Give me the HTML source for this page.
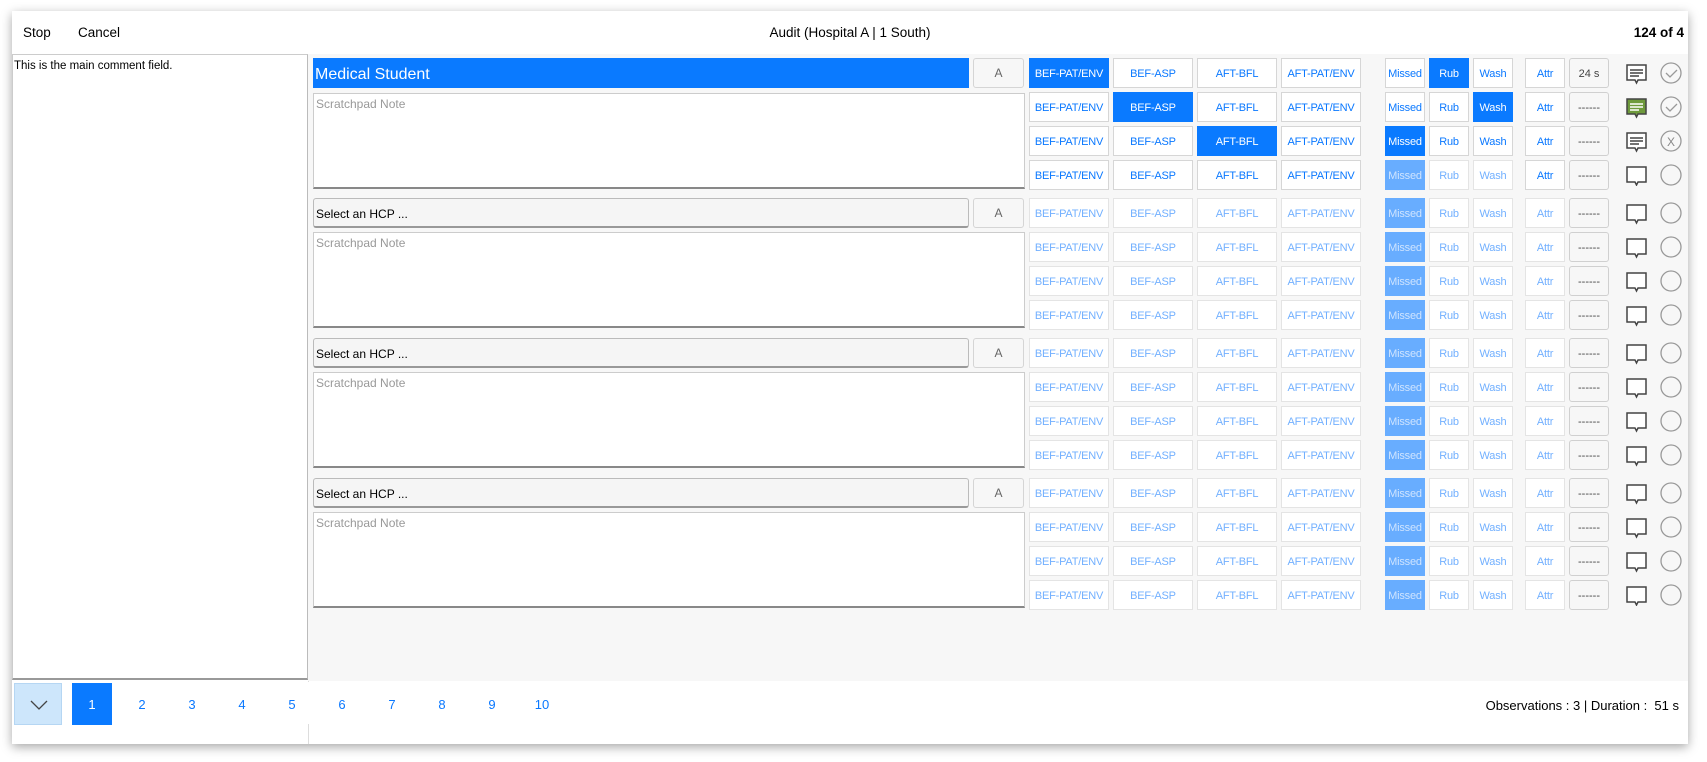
<!DOCTYPE html>
<html><head><meta charset="utf-8"><style>
*{box-sizing:border-box;margin:0;padding:0}
body{width:1707px;height:762px;background:#fff;font-family:"Liberation Sans",sans-serif;position:relative;overflow:hidden}
#win{position:absolute;left:12px;top:11px;width:1676px;height:733px;background:#fff;box-shadow:0 3px 10px rgba(0,0,0,.35)}
.a{position:absolute}
.hd{font-size:13.5px;color:#000;top:14px}
#left{left:0;top:43px;width:296px;height:626px;border:1px solid #ccc;border-right:1px solid #bbb;border-bottom:2px solid #999;background:#fff;font-size:11.5px;padding:5px 1px}
#main{left:296px;top:43px;width:1380px;height:627px;background:#f7f7f7}
#sep{left:296px;top:670px;width:1px;height:63px;background:#ddd}
.b{position:absolute;height:30px;border:1px solid #d6d6d6;background:#fff;color:#0a78ff;font-size:11px;letter-spacing:-0.2px;display:flex;align-items:center;justify-content:center;padding-top:2px}
.on{background:#0a7aff;border-color:#0a7aff;color:#fff}
.f{color:#72b0ff;border-color:#e4e4e4}
.fm{background:#68adff;border-color:#68adff;color:#cfe4ff}
.t{position:absolute;height:30px;width:40px;border:1px solid #d0d0d0;border-radius:3px;background:#f7f7f7;color:#444;font-size:11px;display:flex;align-items:center;justify-content:center;padding-top:2px}
.hcp{position:absolute;left:301px;width:656px;height:30px;border:1px solid #bbb;border-bottom:2px solid #999;border-radius:3px;background:#f5f5f5;font-size:12px;padding-left:2px;padding-top:2px;display:flex;align-items:center}
.ab{position:absolute;left:961px;width:51px;height:30px;border:1px solid #d5d5d5;border-radius:3px;background:#f7f7f7;color:#666;font-size:12px;display:flex;align-items:center;justify-content:center}
.sp{position:absolute;left:301px;width:712px;height:96px;border:1px solid #ccc;border-bottom:2px solid #888;background:#fff;color:#999;font-size:12px;padding:3px 2px}
.pg{position:absolute;top:685px;font-size:13px;color:#0a78ff;width:40px;text-align:center;line-height:40px}
</style></head><body>
<div id="win">
<div class="a hd" style="left:11px">Stop</div>
<div class="a hd" style="left:66px">Cancel</div>
<div class="a hd" style="left:0;width:1676px;text-align:center;padding-right:0">Audit (Hospital A | 1 South)</div>
<div class="a hd" style="right:4px;font-weight:bold">124 of 4</div>
<div class="a" id="left">This is the main comment field.</div>
<div class="a" id="main"></div>
<div class="a" id="sep"></div>
<div class="a" style="left:0;top:671px;width:1676px;height:42px;background:#fff"></div>
<div class="a" style="left:2px;top:672px;width:48px;height:42px;background:#cde6fb;border:1px solid #b5d6f3"><svg width="48" height="42"><path d="M16 17 L24 25 L32 17" fill="none" stroke="#444" stroke-width="1.3"/></svg></div>
<div class="a" style="left:60px;top:672px;width:40px;height:42px;background:#0a7aff"></div>
</div>
<div class="pg" style="left:72px;color:#fff">1</div>
<div class="pg" style="left:122px">2</div>
<div class="pg" style="left:172px">3</div>
<div class="pg" style="left:222px">4</div>
<div class="pg" style="left:272px">5</div>
<div class="pg" style="left:322px">6</div>
<div class="pg" style="left:372px">7</div>
<div class="pg" style="left:422px">8</div>
<div class="pg" style="left:472px">9</div>
<div class="pg" style="left:522px">10</div>
<div class="a" style="right:28px;top:698px;font-size:13px">Observations : 3 | Duration :&nbsp; 51 s</div>

<!-- group 1 -->
<div class="a" style="left:313px;top:58px;width:656px;height:30px;background:#0a7aff;color:#fff;font-size:16px;padding-left:2px;padding-top:3px;display:flex;align-items:center">Medical Student</div>
<div class="ab" style="left:973px;top:58px">A</div>
<div class="sp" style="left:313px;top:93px;height:96px">Scratchpad Note</div>

<div style="position:absolute;top:58px;left:0">
<div class="b on" style="left:1029px;width:80px">BEF-PAT/ENV</div><div class="b" style="left:1113px;width:80px">BEF-ASP</div><div class="b" style="left:1197px;width:80px">AFT-BFL</div><div class="b" style="left:1281px;width:80px">AFT-PAT/ENV</div>
<div class="b" style="left:1385px;width:40px">Missed</div><div class="b on" style="left:1429px;width:40px">Rub</div><div class="b" style="left:1473px;width:40px">Wash</div><div class="b" style="left:1525px;width:40px">Attr</div><div class="t" style="left:1569px">24 s</div>
</div>
<div style="position:absolute;top:92px;left:0">
<div class="b" style="left:1029px;width:80px">BEF-PAT/ENV</div><div class="b on" style="left:1113px;width:80px">BEF-ASP</div><div class="b" style="left:1197px;width:80px">AFT-BFL</div><div class="b" style="left:1281px;width:80px">AFT-PAT/ENV</div>
<div class="b" style="left:1385px;width:40px">Missed</div><div class="b" style="left:1429px;width:40px">Rub</div><div class="b on" style="left:1473px;width:40px">Wash</div><div class="b" style="left:1525px;width:40px">Attr</div><div class="t" style="left:1569px">------</div>
</div>
<div style="position:absolute;top:126px;left:0">
<div class="b" style="left:1029px;width:80px">BEF-PAT/ENV</div><div class="b" style="left:1113px;width:80px">BEF-ASP</div><div class="b on" style="left:1197px;width:80px">AFT-BFL</div><div class="b" style="left:1281px;width:80px">AFT-PAT/ENV</div>
<div class="b on" style="left:1385px;width:40px">Missed</div><div class="b" style="left:1429px;width:40px">Rub</div><div class="b" style="left:1473px;width:40px">Wash</div><div class="b" style="left:1525px;width:40px">Attr</div><div class="t" style="left:1569px">------</div>
</div>
<div style="position:absolute;top:160px;left:0">
<div class="b" style="left:1029px;width:80px">BEF-PAT/ENV</div><div class="b" style="left:1113px;width:80px">BEF-ASP</div><div class="b" style="left:1197px;width:80px">AFT-BFL</div><div class="b" style="left:1281px;width:80px">AFT-PAT/ENV</div>
<div class="b fm" style="left:1385px;width:40px">Missed</div><div class="b f" style="left:1429px;width:40px">Rub</div><div class="b f" style="left:1473px;width:40px">Wash</div><div class="b" style="left:1525px;width:40px">Attr</div><div class="t" style="left:1569px">------</div>
</div>

<svg class="a" style="left:1624px;top:62px" width="26" height="124">
<g fill="#fff" stroke="#444" stroke-width="1.5"><path d="M3 3h19v15h-8l-1.5 3-1.5-3h-8z"/><path d="M6 8h13M6 11h13M6 14h9" /></g>
<g transform="translate(0,34)"><path d="M3 3h19v15h-8l-1.5 3-1.5-3h-8z" fill="#6e9a3c" stroke="#444" stroke-width="1.5"/><path d="M6 8h13M6 11h13M6 14h9" stroke="#fff" stroke-width="1.5"/></g>
<g transform="translate(0,68)" fill="#fff" stroke="#444" stroke-width="1.5"><path d="M3 3h19v15h-8l-1.5 3-1.5-3h-8z"/><path d="M6 8h13M6 11h13M6 14h9"/></g>
<g transform="translate(0,102)" fill="#fff" stroke="#444" stroke-width="1.5"><path d="M3 3h19v15h-8l-1.5 3-1.5-3h-8z"/></g>
</svg>
<svg class="a" style="left:1660px;top:62px" width="24" height="124" fill="none" stroke="#999" stroke-width="1.3">
<circle cx="11" cy="11" r="10"/><path d="M6 11l4 4 7-7"/>
<circle cx="11" cy="45" r="10"/><path d="M6 45l4 4 7-7"/>
<circle cx="11" cy="79" r="10"/><text x="11" y="84" font-size="12" fill="#888" stroke="none" text-anchor="middle" font-family="Liberation Sans">X</text>
<circle cx="11" cy="113" r="10"/>
</svg>

<div class="hcp" style="left:313px;top:198px">Select an HCP ...</div><div class="ab" style="left:973px;top:198px">A</div><div class="sp" style="left:313px;top:232px">Scratchpad Note</div>
<div class="hcp" style="left:313px;top:338px">Select an HCP ...</div><div class="ab" style="left:973px;top:338px">A</div><div class="sp" style="left:313px;top:372px">Scratchpad Note</div>
<div class="hcp" style="left:313px;top:478px">Select an HCP ...</div><div class="ab" style="left:973px;top:478px">A</div><div class="sp" style="left:313px;top:512px">Scratchpad Note</div>

<div style="position:absolute;top:198px;left:0">
<div class="b f" style="left:1029px;width:80px">BEF-PAT/ENV</div><div class="b f" style="left:1113px;width:80px">BEF-ASP</div><div class="b f" style="left:1197px;width:80px">AFT-BFL</div><div class="b f" style="left:1281px;width:80px">AFT-PAT/ENV</div><div class="b fm" style="left:1385px;width:40px">Missed</div><div class="b f" style="left:1429px;width:40px">Rub</div><div class="b f" style="left:1473px;width:40px">Wash</div><div class="b f" style="left:1525px;width:40px">Attr</div><div class="t" style="left:1569px">------</div></div>
<div style="position:absolute;top:232px;left:0">
<div class="b f" style="left:1029px;width:80px">BEF-PAT/ENV</div><div class="b f" style="left:1113px;width:80px">BEF-ASP</div><div class="b f" style="left:1197px;width:80px">AFT-BFL</div><div class="b f" style="left:1281px;width:80px">AFT-PAT/ENV</div><div class="b fm" style="left:1385px;width:40px">Missed</div><div class="b f" style="left:1429px;width:40px">Rub</div><div class="b f" style="left:1473px;width:40px">Wash</div><div class="b f" style="left:1525px;width:40px">Attr</div><div class="t" style="left:1569px">------</div></div>
<div style="position:absolute;top:266px;left:0">
<div class="b f" style="left:1029px;width:80px">BEF-PAT/ENV</div><div class="b f" style="left:1113px;width:80px">BEF-ASP</div><div class="b f" style="left:1197px;width:80px">AFT-BFL</div><div class="b f" style="left:1281px;width:80px">AFT-PAT/ENV</div><div class="b fm" style="left:1385px;width:40px">Missed</div><div class="b f" style="left:1429px;width:40px">Rub</div><div class="b f" style="left:1473px;width:40px">Wash</div><div class="b f" style="left:1525px;width:40px">Attr</div><div class="t" style="left:1569px">------</div></div>
<div style="position:absolute;top:300px;left:0">
<div class="b f" style="left:1029px;width:80px">BEF-PAT/ENV</div><div class="b f" style="left:1113px;width:80px">BEF-ASP</div><div class="b f" style="left:1197px;width:80px">AFT-BFL</div><div class="b f" style="left:1281px;width:80px">AFT-PAT/ENV</div><div class="b fm" style="left:1385px;width:40px">Missed</div><div class="b f" style="left:1429px;width:40px">Rub</div><div class="b f" style="left:1473px;width:40px">Wash</div><div class="b f" style="left:1525px;width:40px">Attr</div><div class="t" style="left:1569px">------</div></div>

<div style="position:absolute;top:338px;left:0">
<div class="b f" style="left:1029px;width:80px">BEF-PAT/ENV</div><div class="b f" style="left:1113px;width:80px">BEF-ASP</div><div class="b f" style="left:1197px;width:80px">AFT-BFL</div><div class="b f" style="left:1281px;width:80px">AFT-PAT/ENV</div><div class="b fm" style="left:1385px;width:40px">Missed</div><div class="b f" style="left:1429px;width:40px">Rub</div><div class="b f" style="left:1473px;width:40px">Wash</div><div class="b f" style="left:1525px;width:40px">Attr</div><div class="t" style="left:1569px">------</div></div>
<div style="position:absolute;top:372px;left:0">
<div class="b f" style="left:1029px;width:80px">BEF-PAT/ENV</div><div class="b f" style="left:1113px;width:80px">BEF-ASP</div><div class="b f" style="left:1197px;width:80px">AFT-BFL</div><div class="b f" style="left:1281px;width:80px">AFT-PAT/ENV</div><div class="b fm" style="left:1385px;width:40px">Missed</div><div class="b f" style="left:1429px;width:40px">Rub</div><div class="b f" style="left:1473px;width:40px">Wash</div><div class="b f" style="left:1525px;width:40px">Attr</div><div class="t" style="left:1569px">------</div></div>
<div style="position:absolute;top:406px;left:0">
<div class="b f" style="left:1029px;width:80px">BEF-PAT/ENV</div><div class="b f" style="left:1113px;width:80px">BEF-ASP</div><div class="b f" style="left:1197px;width:80px">AFT-BFL</div><div class="b f" style="left:1281px;width:80px">AFT-PAT/ENV</div><div class="b fm" style="left:1385px;width:40px">Missed</div><div class="b f" style="left:1429px;width:40px">Rub</div><div class="b f" style="left:1473px;width:40px">Wash</div><div class="b f" style="left:1525px;width:40px">Attr</div><div class="t" style="left:1569px">------</div></div>
<div style="position:absolute;top:440px;left:0">
<div class="b f" style="left:1029px;width:80px">BEF-PAT/ENV</div><div class="b f" style="left:1113px;width:80px">BEF-ASP</div><div class="b f" style="left:1197px;width:80px">AFT-BFL</div><div class="b f" style="left:1281px;width:80px">AFT-PAT/ENV</div><div class="b fm" style="left:1385px;width:40px">Missed</div><div class="b f" style="left:1429px;width:40px">Rub</div><div class="b f" style="left:1473px;width:40px">Wash</div><div class="b f" style="left:1525px;width:40px">Attr</div><div class="t" style="left:1569px">------</div></div>

<div style="position:absolute;top:478px;left:0">
<div class="b f" style="left:1029px;width:80px">BEF-PAT/ENV</div><div class="b f" style="left:1113px;width:80px">BEF-ASP</div><div class="b f" style="left:1197px;width:80px">AFT-BFL</div><div class="b f" style="left:1281px;width:80px">AFT-PAT/ENV</div><div class="b fm" style="left:1385px;width:40px">Missed</div><div class="b f" style="left:1429px;width:40px">Rub</div><div class="b f" style="left:1473px;width:40px">Wash</div><div class="b f" style="left:1525px;width:40px">Attr</div><div class="t" style="left:1569px">------</div></div>
<div style="position:absolute;top:512px;left:0">
<div class="b f" style="left:1029px;width:80px">BEF-PAT/ENV</div><div class="b f" style="left:1113px;width:80px">BEF-ASP</div><div class="b f" style="left:1197px;width:80px">AFT-BFL</div><div class="b f" style="left:1281px;width:80px">AFT-PAT/ENV</div><div class="b fm" style="left:1385px;width:40px">Missed</div><div class="b f" style="left:1429px;width:40px">Rub</div><div class="b f" style="left:1473px;width:40px">Wash</div><div class="b f" style="left:1525px;width:40px">Attr</div><div class="t" style="left:1569px">------</div></div>
<div style="position:absolute;top:546px;left:0">
<div class="b f" style="left:1029px;width:80px">BEF-PAT/ENV</div><div class="b f" style="left:1113px;width:80px">BEF-ASP</div><div class="b f" style="left:1197px;width:80px">AFT-BFL</div><div class="b f" style="left:1281px;width:80px">AFT-PAT/ENV</div><div class="b fm" style="left:1385px;width:40px">Missed</div><div class="b f" style="left:1429px;width:40px">Rub</div><div class="b f" style="left:1473px;width:40px">Wash</div><div class="b f" style="left:1525px;width:40px">Attr</div><div class="t" style="left:1569px">------</div></div>
<div style="position:absolute;top:580px;left:0">
<div class="b f" style="left:1029px;width:80px">BEF-PAT/ENV</div><div class="b f" style="left:1113px;width:80px">BEF-ASP</div><div class="b f" style="left:1197px;width:80px">AFT-BFL</div><div class="b f" style="left:1281px;width:80px">AFT-PAT/ENV</div><div class="b fm" style="left:1385px;width:40px">Missed</div><div class="b f" style="left:1429px;width:40px">Rub</div><div class="b f" style="left:1473px;width:40px">Wash</div><div class="b f" style="left:1525px;width:40px">Attr</div><div class="t" style="left:1569px">------</div></div>

<svg class="a" style="left:1624px;top:202px" width="26" height="404">
<defs><g id="bb"><path d="M3 3h19v15h-8l-1.5 3-1.5-3h-8z" fill="#fff" stroke="#444" stroke-width="1.5"/></g></defs>
<use href="#bb" y="0"/><use href="#bb" y="34"/><use href="#bb" y="68"/><use href="#bb" y="102"/>
<use href="#bb" y="140"/><use href="#bb" y="174"/><use href="#bb" y="208"/><use href="#bb" y="242"/>
<use href="#bb" y="280"/><use href="#bb" y="314"/><use href="#bb" y="348"/><use href="#bb" y="382"/>
</svg>
<svg class="a" style="left:1660px;top:202px" width="24" height="404" fill="none" stroke="#999" stroke-width="1.3">
<circle cx="11" cy="11" r="10"/><circle cx="11" cy="45" r="10"/><circle cx="11" cy="79" r="10"/><circle cx="11" cy="113" r="10"/>
<circle cx="11" cy="151" r="10"/><circle cx="11" cy="185" r="10"/><circle cx="11" cy="219" r="10"/><circle cx="11" cy="253" r="10"/>
<circle cx="11" cy="291" r="10"/><circle cx="11" cy="325" r="10"/><circle cx="11" cy="359" r="10"/><circle cx="11" cy="393" r="10"/>
</svg>
</body></html>
